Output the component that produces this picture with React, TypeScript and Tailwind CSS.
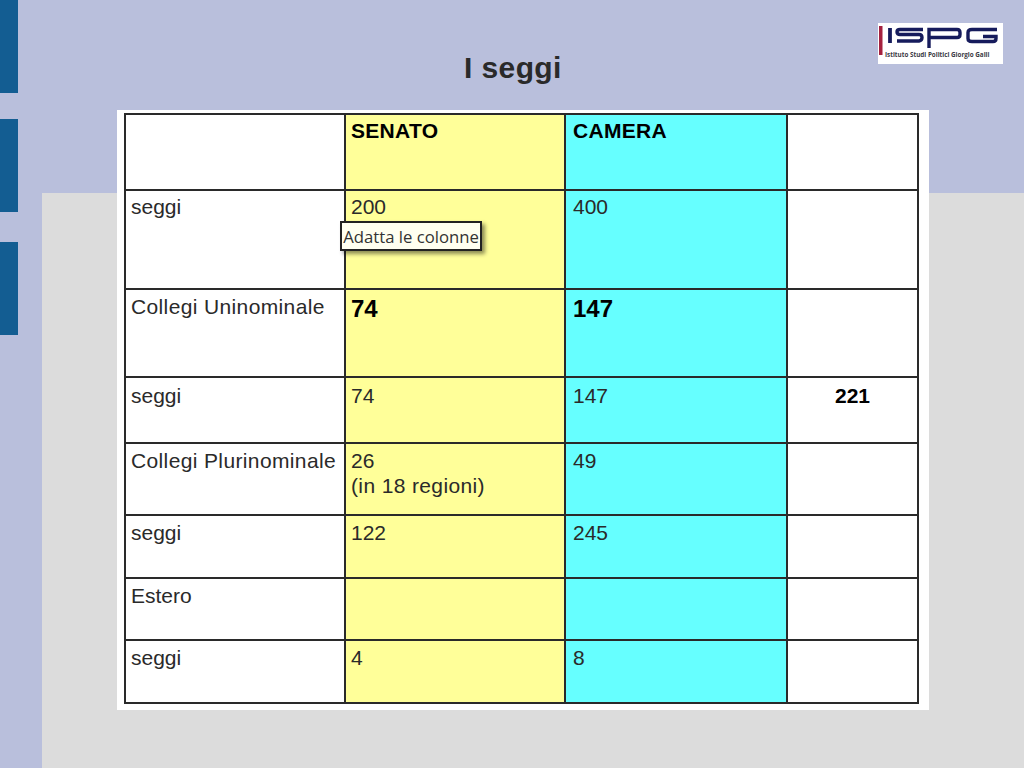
import React from "react";

const sans = "font-['Liberation_Sans',Arial,sans-serif]";
const wide = "tracking-[0.37px]";

const rows = [
  { h: "h-[76px]", pt: "pt-[3px]", a: "", b: <b className="text-[21px] tracking-[0.3px] text-black">SENATO</b>, c: <b className="text-[21px] tracking-[0.3px] text-black">CAMERA</b>, d: "" },
  { h: "h-[99px]", pt: "pt-[3px]", a: "seggi", b: "200", c: "400", d: "" },
  { h: "h-[88px]", pt: "pt-[4px]", a: <span className={wide}>Collegi Uninominale</span>, b: <b className="block mt-[2px] text-[24px] text-black">74</b>, c: <b className="block mt-[2px] text-[24px] text-black">147</b>, d: "" },
  { h: "h-[66px]", pt: "pt-[5px]", a: "seggi", b: "74", c: "147", d: <b className="block text-center text-[21px] text-black">221</b> },
  { h: "h-[72px]", pt: "pt-[4px]", a: <span className={wide}>Collegi Plurinominale</span>, b: <>26<br /><span className={wide}>(in 18 regioni)</span></>, c: "49", d: "" },
  { h: "h-[63px]", pt: "pt-[4px]", a: "seggi", b: "122", c: "245", d: "" },
  { h: "h-[62px]", pt: "pt-[4px]", a: "Estero", b: "", c: "", d: "" },
  { h: "h-[63px]", pt: "pt-[4px]", a: "seggi", b: "4", c: "8", d: "" },
];

function Logo() {
  return (
    <div className="w-[125px] h-[41px] bg-white relative">
      <svg width="125" height="41" viewBox="0 0 125 41" className="block">
        <rect x="1" y="3" width="3.5" height="29" fill="#a5213f" />
        <g fill="none" stroke="#161b5c" strokeWidth="3.4">
          <path d="M12 5v15" strokeWidth="3.8" />
          <path d="M45 6.5H22q-3 0-3 2.5t3 2.5h19q3 0 3 3t-3 3.5H19" />
          <path d="M51 25V6.5h28q3 0 3 3v2q0 3-3 3H52" />
          <path d="M119 6.5H94q-4 0-4 3v6q0 3 4 3h21q3 0 3-3v-2h-13" />
        </g>
      </svg>
      <span className="absolute left-[7px] top-[27px] whitespace-nowrap text-[6.3px] font-bold leading-[9px] text-[#3a3a44] font-['Open_Sans',sans-serif]">
        Istituto Studi Politici Giorgio Galli
      </span>
    </div>
  );
}

export default function App() {
  return (
    <div className={`w-[1024px] h-[768px] flex overflow-hidden bg-[#b9bfdc] ${sans}`}>
      {/* side bars */}
      <div className="w-[42px] shrink-0">
        <div className="w-[18px] h-[93px] bg-[#135d92]" />
        <div className="w-[18px] h-[93px] mt-[26px] bg-[#135d92]" />
        <div className="w-[18px] h-[93px] mt-[30px] bg-[#135d92]" />
      </div>

      <div className="flex-1 bg-[linear-gradient(to_bottom,#b9bfdc_193px,#dcdcdc_193px)]">
        <div className="h-[110px] flex items-start">
          <h1 className="ml-[422px] mt-[51px] text-[30px] tracking-[0.4px] leading-[34px] font-bold text-[#2a2a2a]">I seggi</h1>
          <div className="ml-auto mr-[21px] mt-[23px]">
            <Logo />
          </div>
        </div>

        {/* pasted table */}
        <div className="ml-[75px] w-[812px] h-[600px] bg-white pl-[7px] pt-[3px] relative">
          <table className="table-fixed border-collapse w-[793px] text-[21px] leading-[25px] text-[#2a2a2a]">
            <colgroup>
              <col className="w-[220px]" />
              <col className="w-[220px]" />
              <col className="w-[222px]" />
              <col className="w-[131px]" />
            </colgroup>
            <tbody>
              {rows.map((r, i) => (
                <tr key={i} className={r.h}>
                  <td className={`border-2 border-[#2a2a2a] align-top px-[5px] ${r.pt}`}>{r.a}</td>
                  <td className={`border-2 border-[#2a2a2a] align-top px-[5px] ${r.pt} bg-[#ffff99]`}>{r.b}</td>
                  <td className={`border-2 border-[#2a2a2a] align-top px-[7px] ${r.pt} bg-[#66ffff]`}>{r.c}</td>
                  <td className={`border-2 border-[#2a2a2a] align-top px-[5px] ${r.pt}`}>{r.d}</td>
                </tr>
              ))}
            </tbody>
          </table>
          {/* tooltip */}
          <div className="absolute left-[223px] top-[111px] w-[142px] h-[30px] pt-[1px] border-2 border-[#222] bg-[#fffff0] shadow-[3px_3px_4px_rgba(0,0,0,0.45)] flex items-center justify-center whitespace-nowrap text-[16.7px] text-[#333] font-['Open_Sans',sans-serif]">
            Adatta le colonne
          </div>
        </div>
      </div>
    </div>
  );
}
